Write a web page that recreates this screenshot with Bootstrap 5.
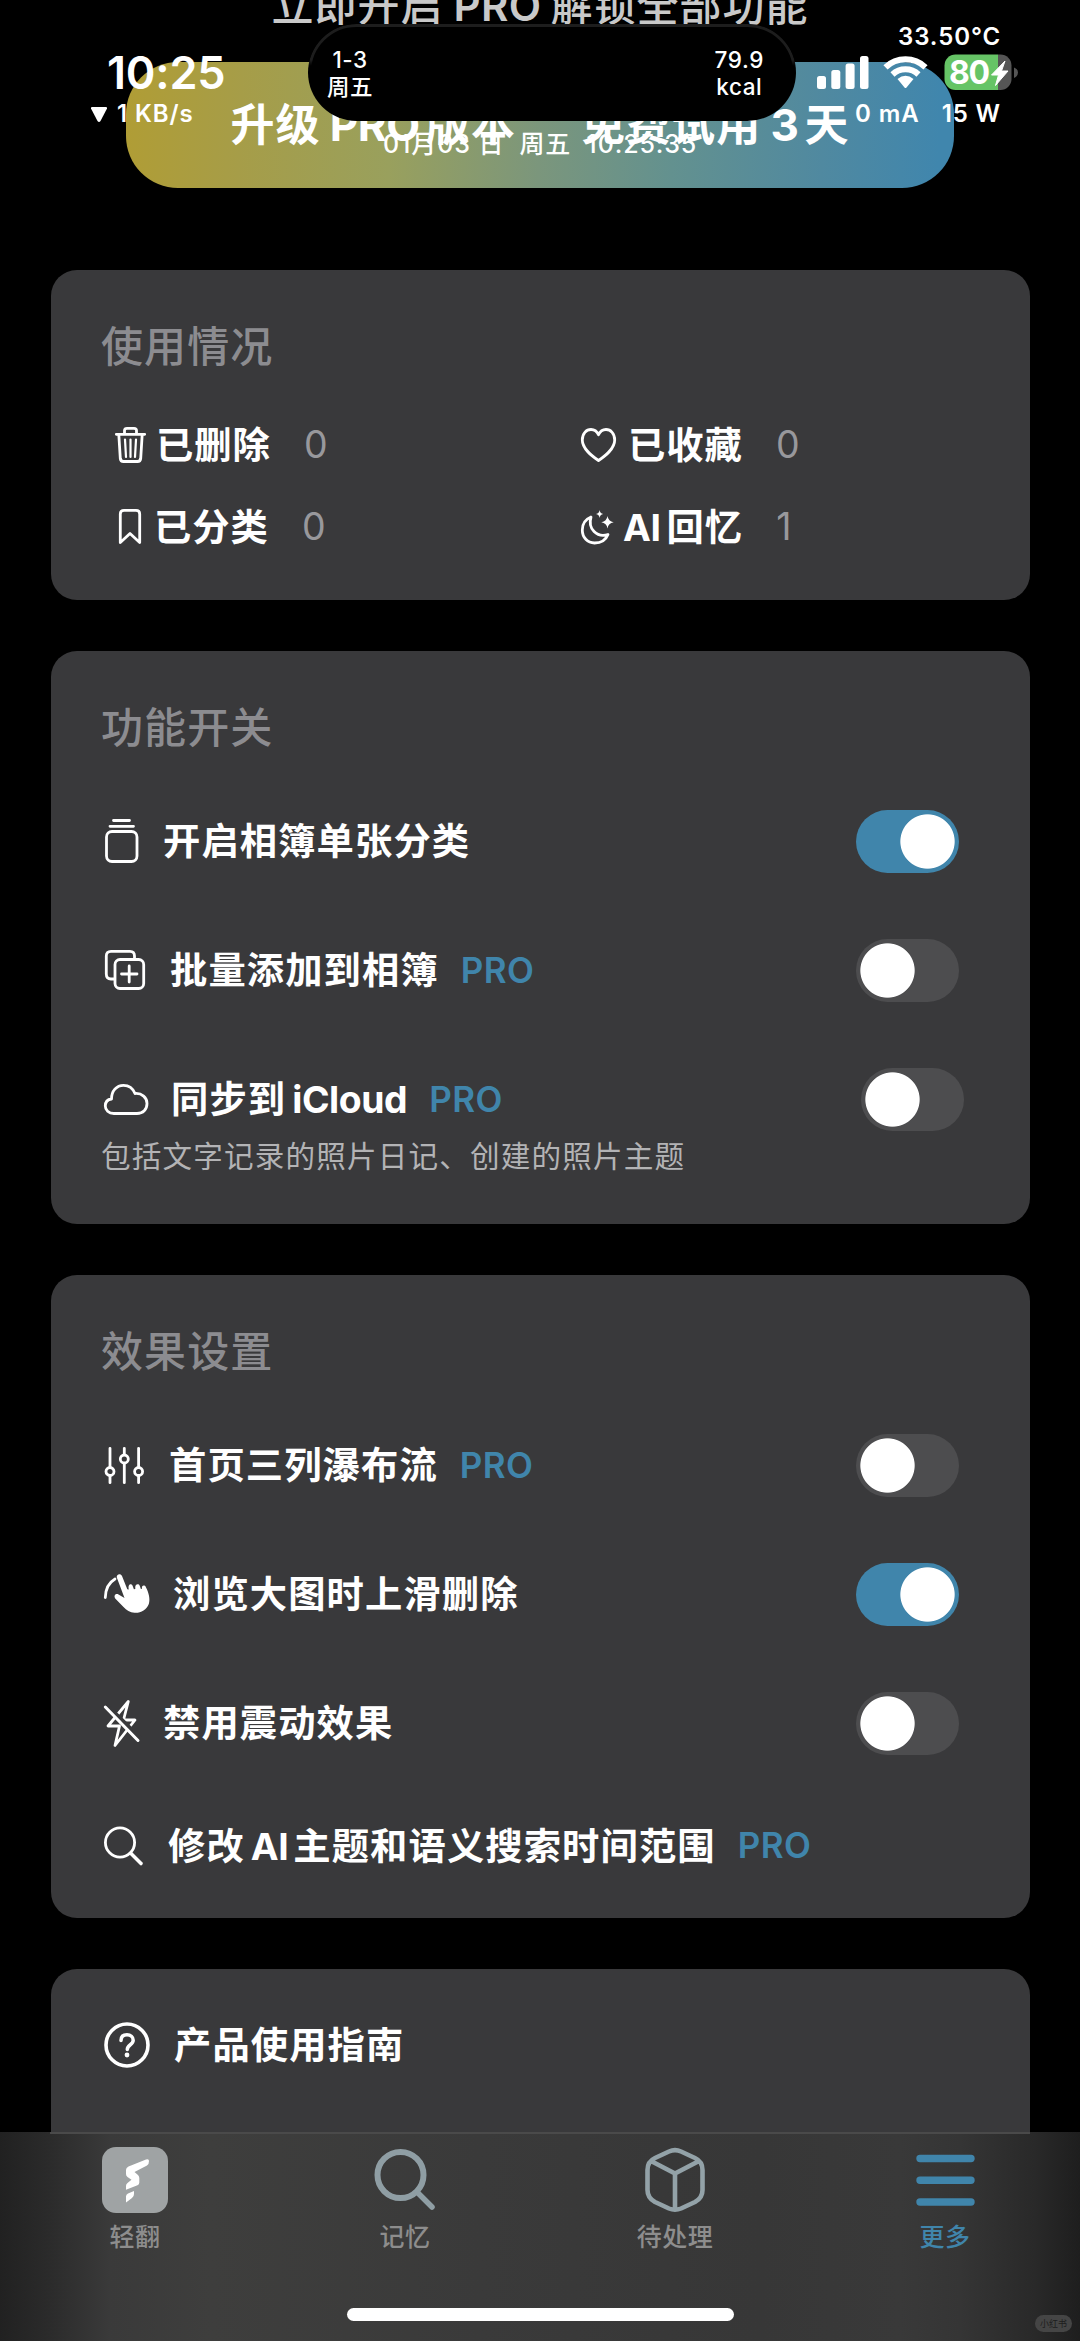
<!DOCTYPE html>
<html lang="zh-CN" data-bs-theme="dark">
<head>
<meta charset="utf-8">
<meta name="viewport" content="width=device-width, initial-scale=1">
<title>更多</title>
<link href="https://cdn.jsdelivr.net/npm/bootstrap@5.3.0/dist/css/bootstrap.min.css" rel="stylesheet">
<style>
:root{--accent:#4085ab;--panel:#39393b}
body{width:1080px;height:2341px;overflow:hidden;background:#000;color:#fff;font-family:Inter,"Noto Sans CJK SC",sans-serif;position:relative}
svg{display:block;flex:none;overflow:visible}
.ln{fill:none;stroke:#fff;stroke-width:2.8;stroke-linecap:round;stroke-linejoin:round}
.lat{font-weight:700;letter-spacing:-.4px;margin:0 7px}
/* hero */
.hero-title{font-size:42px;line-height:50px;letter-spacing:1px;font-weight:500;color:#c9c9c9;margin:-19px 0 31px;text-align:center;white-space:nowrap}
.hero-title .lat{font-weight:600;letter-spacing:.4px;margin:0 9px 0 10px}
.cta{width:828px;height:125.5px;margin:0 auto 82.5px;border:0;border-radius:52px;background:linear-gradient(92deg,#b09d35 0%,#a69d48 14%,#99a05d 32%,#7b967c 50%,#63918f 66%,#5089a0 84%,#4086ad 98%);color:#fff;font-size:44px;font-weight:600;letter-spacing:1.1px;line-height:50px;white-space:nowrap;padding:1px 0 0}
/* panels */
.page-col{padding:0 50px 0 50.5px}
.panel{background:var(--panel);border:0;border-radius:26px;margin-bottom:50.5px;padding:47px 71px 0 50.5px}
.panel-title{font-size:42px;line-height:60px;letter-spacing:1.1px;font-weight:500;color:#8c8c90;margin:0}
.usage{height:330px}.usage .stats{margin-top:26.5px}
.usage .row{padding-left:14px}
.stat{height:82.5px;font-size:37.3px;font-weight:600;letter-spacing:1px}
.stat-l{width:466px}
.stat span{position:relative;top:1px}
.stat b{font-weight:400;color:#98989c;margin-left:33px;font-size:37.5px;letter-spacing:0}
.rows{gap:66px;margin-top:52px}
.opt{height:63px;font-size:37.3px;font-weight:600;letter-spacing:1.1px;white-space:nowrap;padding-left:3.500px}
.opt>span{padding-top:2px}
.opt.short{height:50px}
.opt>.pro{color:var(--accent);font-size:35px;letter-spacing:.4px;margin-left:22px;padding-top:0}
.note{font-size:29.6px;line-height:36px;letter-spacing:1.15px;color:#b3b3b5;margin-top:-59px;white-space:nowrap;font-weight:400}
.form-switch .form-check-input,.form-switch .form-check-input:checked{float:none;margin:0;width:103px;height:63px;border:0;border-radius:32px;background-color:#4d4d4f;background-image:radial-gradient(circle at 31.5px 31.5px,#fff 26.7px,rgba(255,255,255,0) 27.6px);background-size:63px 63px;background-repeat:no-repeat;background-position:left center}
.form-switch .form-check-input:checked{background-color:var(--accent);background-position:right center}
/* tab bar */
.tabs{height:209px;background:linear-gradient(90deg,#212121 0,#2a2a2a 45px,#3a3a3a 110px,#3e3e3d 210px,#3a3a3a 480px,#373737 760px,#393939 900px,#353535 960px,#292929 1035px,#1e1e1e 1080px);z-index:5}
.tabs::before{content:"";position:absolute;left:50px;right:50px;top:0;height:2px;background:#4a4a4a}
.tab{width:270px;padding:15px 0 0;color:#8d8d8d;font-size:25px;line-height:30px;letter-spacing:.5px;font-weight:500;border:0;background:none}
.tab svg{margin:0 auto 9px}
.tab.active{color:var(--accent)}
.homebar{left:346.5px;bottom:20px;width:387px;height:13px;border-radius:7px;background:#fff}
.wm{right:8px;bottom:9px;width:37px;height:17px;border-radius:9px;background:#454545;color:#1d1d1d;font-size:9px;line-height:17px;text-align:center}
/* status layer */
.status{inset:0 0 auto 0;height:190px;z-index:10;white-space:nowrap;font-weight:500}
.st-left{left:91px;top:47px}
.clock{font-size:45px;line-height:52px;font-weight:600;margin-left:16px;letter-spacing:-.2px}
.st-s{font-size:24px;line-height:30px;font-weight:600;letter-spacing:.9px}
.island{left:308px;top:24px;width:488px;height:97px;border-radius:49px;background:#000;border:3px solid transparent;font-size:22.5px}
.island::before{content:"";position:absolute;inset:-3px;border-radius:49px;border:3px solid #1d1d1d;-webkit-mask:linear-gradient(#000 36px,transparent 42px);mask:linear-gradient(#000 36px,transparent 42px)}
.island div{line-height:27px;text-align:center;letter-spacing:.6px}
.st-right{right:79px;top:22px}
.date{left:383px;top:128px;font-size:25px;line-height:32px;letter-spacing:.9px;font-weight:500}
</style>
</head>
<body>
<div class="status position-absolute">
  <div class="st-left position-absolute">
    <div class="clock">10:25</div>
    <div class="st-s d-flex align-items-center"><svg width="16" height="15" style="margin-right:10px"><path d="M1 0H15Q16.500 0 16 1.500L9.500 14Q8 16 6.500 14L0 1.500Q-.5 0 1 0Z" fill="#fff"/></svg>1 KB/s</div>
  </div>
  <div class="island position-absolute d-flex justify-content-between align-items-center px-3">
    <div><div>1-3</div><div>周五</div></div>
    <div style="margin-right:13px"><div>79.9</div><div>kcal</div></div>
  </div>
  <div class="st-right position-absolute text-end">
    <div class="st-s">33.50°C</div>
    <div class="d-flex" style="height:50px;margin-right:-17px">
      <svg width="201" height="40" viewBox="0 0 201 40" class="ms-auto">
        <g fill="#fff"><rect x="0" y="24" width="9" height="13" rx="2.500"/><rect x="14.300" y="18" width="9" height="19" rx="2.500"/><rect x="28.600" y="11.500" width="9" height="25.500" rx="2.500"/><rect x="43" y="4" width="8.500" height="33" rx="2.500"/><path d="M80.500 27Q88.500 20.500 96.500 27L89.500 35.500Q88.500 36.700 87.500 35.500Z"/></g>
        <g fill="none" stroke="#fff" stroke-width="6"><path d="M68.500 15.300A29 29 0 0 1 108.500 15.300"/><path d="M75.500 22.500A19 19 0 0 1 101.500 22.500"/></g>
        <clipPath id="bat"><rect x="127.500" y="2.500" width="67" height="35.500" rx="11"/></clipPath>
        <g clip-path="url(#bat)"><rect x="127" y="2" width="54" height="37" fill="#66c466"/><rect x="181" y="2" width="15" height="37" fill="#555"/></g>
        <path d="M197 15.500Q201 17 201 20.500T197 26Z" fill="#555"/>
        <path d="M188 9L174.500 23H181.500L178.500 33.500L191 19H184.500Z" fill="#fff" stroke="#fff" stroke-linejoin="round"/>
        <text x="132" y="32" fill="#fff" font-size="32" font-weight="700" textLength="41">80</text>
      </svg>
    </div>
    <div class="st-s d-flex justify-content-end" style="margin-top:-3px;gap:22px"><span>0 mA</span><span>15 W</span></div>
  </div>
  <div class="date position-absolute">01月03 日&nbsp; 周五&nbsp; 10:25:35</div>
</div>

<main class="d-flex flex-column">
  <h1 class="hero-title">立即开启<span class="lat">PRO</span>解锁全部功能</h1>
  <button class="cta btn" type="button">升级<span class="lat" style="margin:0 6px 0 9px">PRO</span>版本<span style="margin-left:65px">免费试用</span><span class="lat" style="margin:0 6px 0 9px">3</span>天</button>
  <div class="page-col">
    <section class="panel card usage">
      <h2 class="panel-title">使用情况</h2>
      <div class="stats row g-0">
        <div class="stat stat-l d-flex align-items-center"><svg width="31" height="36" class="ln" style="margin-right:10px"><path d="M1.300 7.300H29.700M9.500 7V3.500Q9.500 1.300 12 1.300H19Q21.500 1.300 21.500 3.500V7M3.800 7.500L5.300 31.500Q5.600 34.500 8.500 34.500H22.500Q25.400 34.500 25.700 31.500L27.200 7.500"/><path stroke-width="2.200" d="M10 12.500L11 30M15.500 12.500V30M21 12.500L20 30"/></svg><span>已删除</span><b>0</b></div>
        <div class="col stat d-flex align-items-center"><svg width="35" height="34" class="ln" style="margin-right:12px"><path d="M17.500 32.500C11 28 1.300 21 1.300 12C1.300 5.500 5.300 1.500 10 1.500C13.500 1.500 16 3.500 17.500 6.700C19 3.500 21.500 1.500 25 1.500C29.700 1.500 33.700 5.500 33.700 12C33.700 21 24 28 17.500 32.500Z"/></svg><span>已收藏</span><b>0</b></div>
      </div>
      <div class="row g-0">
        <div class="stat stat-l d-flex align-items-center"><svg width="22" height="36" class="ln" style="margin:0 13px 0 4px"><path d="M1.300 33.500V5Q1.300 1.300 5 1.300H17Q20.700 1.300 20.700 5V33.500L11 24.500Z"/></svg><span>已分类</span><b>0</b></div>
        <div class="col stat d-flex align-items-center"><svg width="33" height="35" class="ln" style="margin-right:2px"><path d="M10 7C4 9.500 1.300 14.500 1.300 20C1.300 27.500 6.500 33 13.500 33C20 33 25 29.500 27 24.500C16 28 6.500 19 10 7Z"/><path fill="#fff" stroke="none" d="M18.600 0Q19 3.600 22.200 4Q19 4.400 18.600 8Q18.200 4.400 15 4Q18.200 3.600 18.600 0ZM26.500 6Q27.300 11.500 32.700 12.300Q27.300 13.100 26.500 18.600Q25.700 13.100 20.300 12.300Q25.700 11.500 26.500 6Z"/></svg><span class="lat" style="margin-right:6px">AI</span><span>回忆</span><b>1</b></div>
      </div>
    </section>

    <section class="panel card" style="height:573.5px">
      <h2 class="panel-title">功能开关</h2>
      <div class="rows d-flex flex-column">
        <div class="opt d-flex align-items-center"><svg width="34" height="44" class="ln"><path d="M8.500 1.500H24.500M5 7.300H28.500"/><rect x="1.500" y="12.500" width="30.500" height="30" rx="5.500"/></svg><span style="margin-left:24.500px">开启相簿单张分类</span><div class="form-check form-switch ms-auto p-0 m-0 lh-1"><input class="form-check-input" type="checkbox" role="switch" aria-label="开启相簿单张分类" checked></div></div>
        <div class="opt d-flex align-items-center"><svg width="40" height="40" class="ln"><path d="M29.500 8.500V6Q29.500 1.300 25 1.300H6Q1.300 1.300 1.300 6V24Q1.300 29 6 29H9"/><rect x="10" y="9.500" width="28.700" height="29" rx="5"/><path d="M16.500 24H32M24.200 16V32"/></svg><span style="margin-left:25.500px">批量添加到相簿</span><span class="pro">PRO</span><div class="form-check form-switch ms-auto p-0 m-0 lh-1"><input class="form-check-input" type="checkbox" role="switch" aria-label="批量添加到相簿"></div></div>
        <div class="opt d-flex align-items-center" style="margin-right:-5px"><svg width="44" height="31" class="ln" style="margin-left:-1px"><path d="M10 29.500C4.500 29.500 1.300 26 1.300 22C1.300 18.300 3.500 15.500 7.500 15C7.500 7 12.500 1.300 19.500 1.300C25.500 1.300 29 4.500 31 9.500C38 9 43 13.500 43 19.500C43 25.500 39 29.500 33 29.500Z"/></svg><span style="margin-left:23.500px">同步到<span class="lat" style="margin:0 0 0 6px">iCloud</span></span><span class="pro">PRO</span><div class="form-check form-switch ms-auto p-0 m-0 lh-1"><input class="form-check-input" type="checkbox" role="switch" aria-label="同步到 iCloud"></div></div>
        <div class="note">包括文字记录的照片日记、创建的照片主题</div>
      </div>
    </section>

    <section class="panel card" style="height:643.5px">
      <h2 class="panel-title">效果设置</h2>
      <div class="rows d-flex flex-column">
        <div class="opt d-flex align-items-center"><svg width="39" height="37" class="ln"><path d="M5 1.300V20M5 29V35.700M19.300 1.300V7.500M19.300 16.500V35.700M33.600 1.300V20M33.600 29V35.700"/><circle cx="5" cy="24.500" r="4"/><circle cx="19.300" cy="12" r="4"/><circle cx="33.600" cy="24.500" r="4"/></svg><span style="margin-left:25.500px">首页三列瀑布流</span><span class="pro">PRO</span><div class="form-check form-switch ms-auto p-0 m-0 lh-1"><input class="form-check-input" type="checkbox" role="switch" aria-label="首页三列瀑布流"></div></div>
        <div class="opt d-flex align-items-center"><svg width="45" height="40" style="margin-left:-1px"><path class="ln" d="M1.300 23.500C1.500 15 5 8.500 11 5"/><path fill="#fff" d="M12.800 3.500C12 .5 16.500-1.200 18 2L23.300 15.200L24.800 15.500C23.500 10 27.300 9.200 28.500 11.500L29.900 15.200L31.300 15C30.500 10 34.500 9.300 35.700 11.700L36.900 15L38 14.700C37.200 10.800 41.300 10.700 42 13.500C44.500 18 46.500 25 44.800 30C42.500 36 36.500 39.300 30.500 38.800C26 38.500 22.500 36 19.500 33L11.200 24.500C9.300 21.500 12 19 14.500 20.500L20.500 24Z"/></svg><span style="margin-left:24.500px">浏览大图时上滑删除</span><div class="form-check form-switch ms-auto p-0 m-0 lh-1"><input class="form-check-input" type="checkbox" role="switch" aria-label="浏览大图时上滑删除" checked></div></div>
        <div class="opt d-flex align-items-center"><svg width="35" height="47" class="ln" style="margin-left:-1px"><path d="M24.300 1.500L4 26H15.500L11 45.500L31 20H19.500Z"/><path d="M2 5L36 38.500" stroke="#39393b" stroke-width="5" stroke-linecap="butt"/><path d="M1.300 7L34 40.500" stroke-width="3"/></svg><span style="margin-left:24.500px">禁用震动效果</span><div class="form-check form-switch ms-auto p-0 m-0 lh-1"><input class="form-check-input" type="checkbox" role="switch" aria-label="禁用震动效果"></div></div>
        <div class="opt short d-flex align-items-center"><svg width="39" height="40" class="ln" style="margin-left:-1px"><circle cx="16" cy="16.500" r="14.600"/><path stroke-width="3.600" d="M27 27.500L37 37.500"/></svg><span style="margin-left:25.500px">修改<span class="lat" style="margin:0 5px 0 6px">AI</span>主题和语义搜索时间范围</span><span class="pro">PRO</span></div>
      </div>
    </section>

    <section class="panel card" style="height:330px;padding-top:51.5px">
      <div class="opt short d-flex align-items-center"><svg width="46" height="46" class="ln" style="margin-left:-1px"><circle cx="23" cy="23" r="21" stroke-width="3.600"/><path stroke-width="3.500" d="M17 18.500C17 14.500 19.500 12.800 23 12.800C26.500 12.800 29.200 15 29.200 18.200C29.200 23 23.300 22.500 23.300 27.500"/><circle cx="23" cy="33" r="2.400" fill="#fff" stroke="none"/></svg><span style="margin-left:24.500px">产品使用指南</span></div>
    </section>
  </div>
</main>

<nav class="tabs position-absolute bottom-0 start-0 w-100 d-flex align-items-start">
  <button class="tab"><svg width="66" height="66"><rect width="66" height="66" rx="14" fill="#9fa3a4"/><path fill="#fff" d="M24 23Q24 20.500 26.500 19.500L44 12.500Q47 11.500 47 14Q47 17.500 45 18.500L32.500 25L36 28Q37.300 29.300 37.300 31V35.500Q37.300 37.500 35.500 38.300L24 42.700V39Q24 37 25.500 36L29.500 32.700L25.500 30Q24 29 24 27ZM24 49.500Q24 47.500 26 46.600L32 44V47Q32 49.500 30 51L24 55.500Z"/></svg>轻翻</button>
  <button class="tab"><svg width="62" height="66"><g fill="none" stroke="#8f9ea4" stroke-width="6" stroke-linecap="round"><circle cx="26.500" cy="28" r="23"/><path stroke-width="5.500" d="M43 45L58 60"/></g></svg>记忆</button>
  <button class="tab"><svg width="60" height="66"><path fill="none" stroke="#93a2a8" stroke-width="4.600" stroke-linejoin="round" d="M24 4.500Q30 1.800 36 4.500L50 11Q57.500 14.500 57.500 23V43Q57.500 51 50 55L36 61.500Q30 64 24 61.500L10 55Q2.500 51 2.500 43V23Q2.500 14.500 10 11ZM6 14L30 26.500L54 14M30 26.500V62"/></svg>待处理</button>
  <button class="tab active"><svg width="59" height="66"><path stroke="#4085ab" stroke-width="7.400" stroke-linecap="round" d="M4 11.500H55M4 33.300H55M4 55H55"/></svg>更多</button>
  <div class="homebar position-absolute"></div>
  <div class="wm position-absolute">小红书</div>
</nav>
<script src="https://cdn.jsdelivr.net/npm/bootstrap@5.3.0/dist/js/bootstrap.bundle.min.js"></script>
</body>
</html>
